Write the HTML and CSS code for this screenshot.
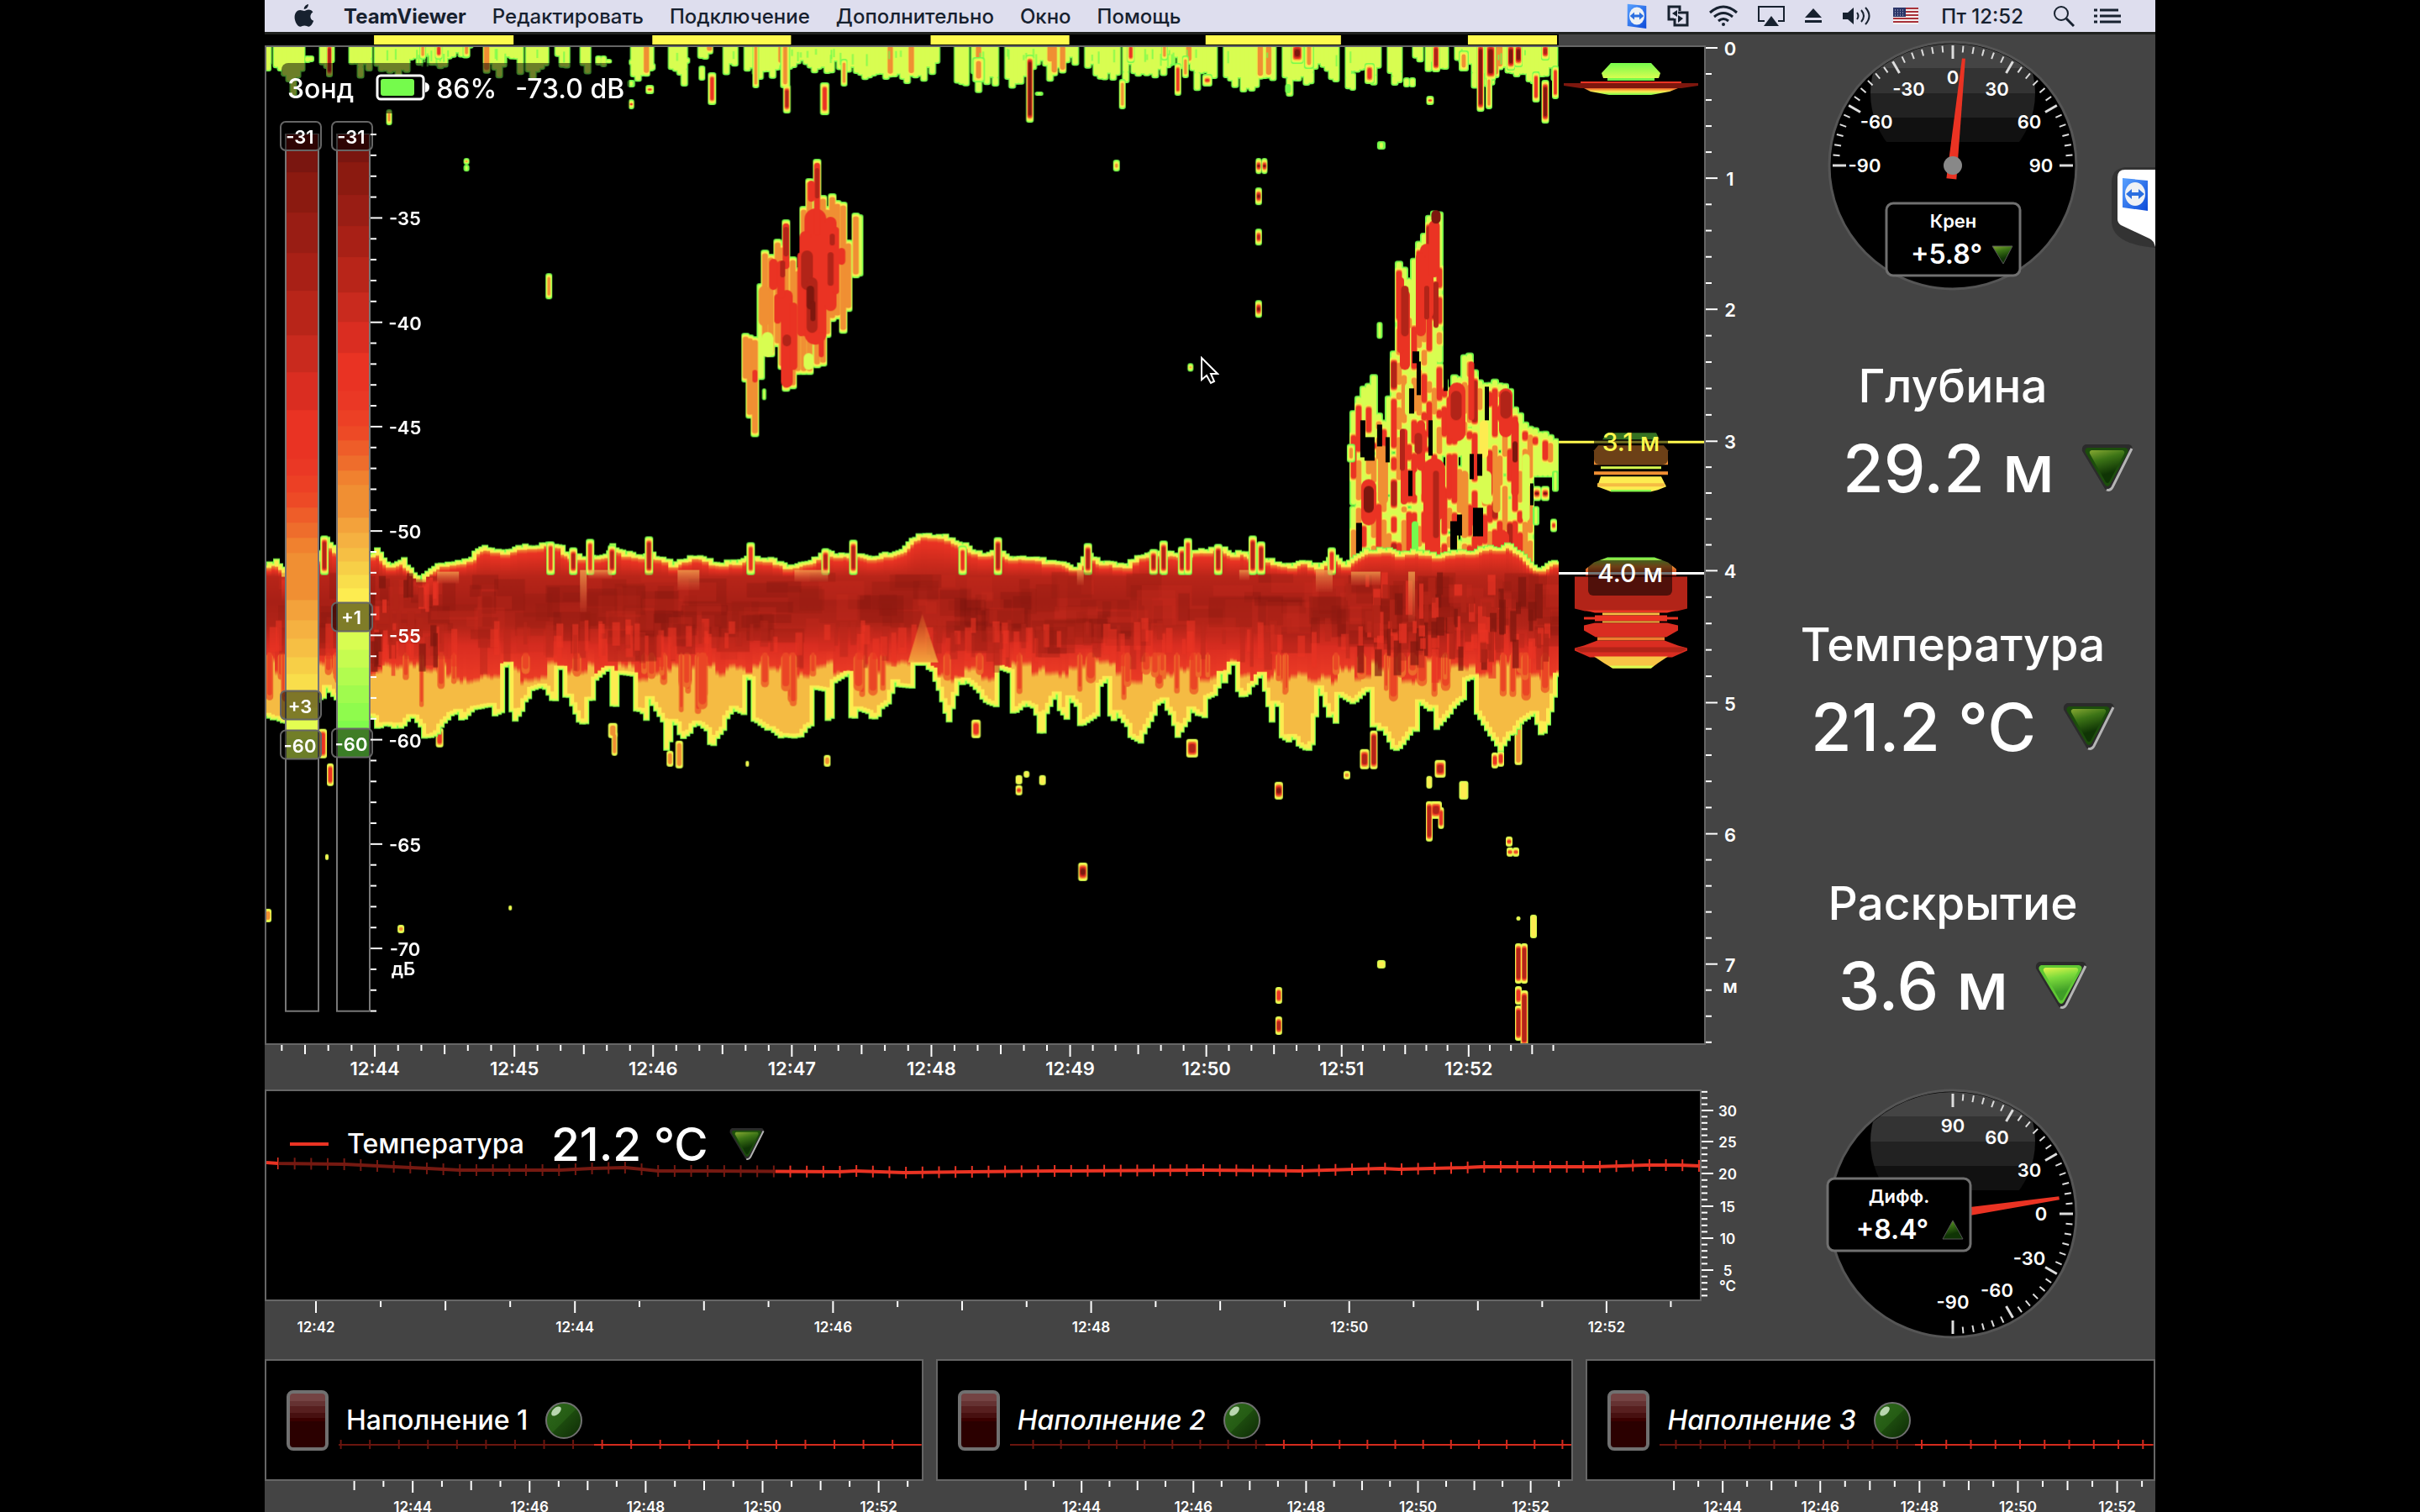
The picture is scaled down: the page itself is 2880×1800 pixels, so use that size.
FILE: index.html
```html
<!DOCTYPE html>
<html lang="ru">
<head>
  <meta charset="utf-8">
  <title>TeamViewer</title>
  <link rel="stylesheet" href="styles.css">
</head>
<body>
  <svg class="defs" aria-hidden="true">
    <defs>
      <linearGradient id="dimFace" x1="0" y1="0" x2="0.3" y2="1">
        <stop offset="0" stop-color="#86a832"/><stop offset="0.35" stop-color="#3c7416"/><stop offset="0.8" stop-color="#0f3405"/>
      </linearGradient>
      <linearGradient id="litFace" x1="0" y1="0" x2="0.2" y2="1">
        <stop offset="0" stop-color="#e4f54c"/><stop offset="0.35" stop-color="#7ddb3c"/><stop offset="0.8" stop-color="#3f9e27"/>
      </linearGradient>
      <linearGradient id="ballFace" x1="0" y1="0" x2="1" y2="1">
        <stop offset="0" stop-color="#2f6a1c"/><stop offset="0.5" stop-color="#255c14"/><stop offset="0.52" stop-color="#1c4a0e"/><stop offset="1" stop-color="#0d2a05"/>
      </linearGradient>
      <linearGradient id="tvFace" x1="0" y1="0" x2="1" y2="1">
        <stop offset="0" stop-color="#5aa2ff"/><stop offset="1" stop-color="#0b49d8"/>
      </linearGradient>
      <symbol id="arrow-down" viewBox="0 0 62 58">
        <path d="M5 1h51q6 1 4 8L36 54q-4 5-8 0L1 9Q0 3 5 1z" fill="#2b2b2b"/>
        <path d="M60 6L37 52q-3 5-7 3" fill="none" stroke="#b5b5b5" stroke-width="3"/>
        <path d="M7 5h45q5 1 3 6L34 49q-3 4-6 0L5 11q-2-4 2-6z" fill="#1c4d0c"/>
        <path d="M12 8h37q3 1 2 4L33 46q-2 2-4 0L10 12q-1-3 2-4z" fill="url(#dimFace)"/>
      </symbol>
      <symbol id="arrow-lit" viewBox="0 0 62 58">
        <path d="M5 1h51q6 1 4 8L36 54q-4 5-8 0L1 9Q0 3 5 1z" fill="#2b2b2b"/>
        <path d="M60 6L37 52q-3 5-7 3" fill="none" stroke="#b5b5b5" stroke-width="3"/>
        <path d="M7 5h45q5 1 3 6L34 49q-3 4-6 0L5 11q-2-4 2-6z" fill="#5fc733"/>
        <path d="M12 8h37q3 1 2 4L33 46q-2 2-4 0L10 12q-1-3 2-4z" fill="url(#litFace)"/>
      </symbol>
      <symbol id="ball" viewBox="0 0 46 46">
        <circle cx="23" cy="23" r="21" fill="url(#ballFace)" stroke="#707070" stroke-width="2"/>
        <ellipse cx="14" cy="12" rx="7" ry="4" transform="rotate(-42 14 12)" fill="#b9d7b0"/>
      </symbol>
      <symbol id="teamviewer" viewBox="0 0 34 40">
        <path d="M2 1l30 3v36L2 36z" fill="url(#tvFace)"/>
        <ellipse cx="17" cy="20" rx="12" ry="14" fill="#eef1f5"/>
        <path d="M6 20l7-6v4h8v-4l7 6-7 6v-4h-8v4z" fill="#2b6fe0"/>
      </symbol>
    </defs>
  </svg>

  <main class="desk">
    <nav class="menubar">
      <button class="menu-btn" aria-label="Apple">
        <svg width="24" height="28" viewBox="0 0 24 28"><path d="M17 0c.2 3-2.400 6-5.200 6C11.600 3 14.200.4 17 0zM12 8c1.400 0 2.800-1.400 5.400-1.400 2.200 0 4 1.200 5 2.800-4.400 2.600-3.800 8.600.8 10.400-1 3-3.400 7-5.800 7-1.800 0-2.600-1.200-5-1.200s-3.200 1.200-5 1.200C4 26.800.6 20.600.6 15.600c0-5.400 3.200-8.600 6.600-8.600C9.200 7 10.800 8 12 8z" fill="#17212f"/></svg>
      </button>
      <button class="menu-btn menu-app">TeamViewer</button>
      <button class="menu-btn">Редактировать</button>
      <button class="menu-btn">Подключение</button>
      <button class="menu-btn">Дополнительно</button>
      <button class="menu-btn">Окно</button>
      <button class="menu-btn">Помощь</button>
      <div class="menu-status">
        <svg width="26" height="30"><use href="#teamviewer"/></svg>
        <svg width="26" height="26" viewBox="0 0 26 26" fill="none" stroke="#17212f" stroke-width="3"><path d="M8 17H2V2h13v5M13 9h11v15H9v-8"/><path d="M6 10l6-4v8zM19 16l-6 5v-9z" fill="#17212f" stroke="none"/></svg>
        <svg width="36" height="26" viewBox="0 0 36 26" fill="none" stroke="#17212f" stroke-width="3"><path d="M2 9Q18-5 34 9M7 14q11-9 22 0M12 19q6-5 12 0"/><circle cx="18" cy="23" r="2" fill="#17212f" stroke="none"/></svg>
        <svg width="32" height="26" viewBox="0 0 32 26"><path d="M8 19H1V2h30v17h-7" fill="none" stroke="#17212f" stroke-width="2"/><path d="M16 13l9 12H7z" fill="#17212f"/></svg>
        <svg width="22" height="18" viewBox="0 0 22 18" fill="#17212f"><path d="M11 0l10 11H1zM1 14h20v3H1z"/></svg>
        <svg width="38" height="26" viewBox="0 0 38 26"><path d="M1 9h6l7-6v20l-7-6H1z" fill="#17212f"/><path d="M18 9q3 4 0 8M23 6q6 7 0 14M28 3q9 10 0 20" fill="none" stroke="#17212f" stroke-width="2"/></svg>
        <svg width="30" height="20" viewBox="0 0 30 20"><path d="M0 0h30v20H0z" fill="#f4f0f0"/><path d="M0 1h30M0 5h30M0 9h30M0 13h30M0 17h30" stroke="#a8323a" stroke-width="2"/><path d="M0 0h15v11H0z" fill="#2b3568"/><path d="M2 3h11M2 6h11M2 9h11" stroke="#d5d8e8" stroke-width="1" stroke-dasharray="1 2"/></svg>
        <time>Пт 12:52</time>
        <button class="menu-btn" aria-label="Поиск"><svg width="26" height="26" viewBox="0 0 26 26" fill="none" stroke="#17212f" stroke-width="2"><circle cx="10" cy="10" r="8"/><path d="M16 16l9 9" stroke-width="3"/></svg></button>
        <button class="menu-btn" aria-label="Уведомления"><svg width="32" height="20" viewBox="0 0 32 20" stroke="#17212f" stroke-width="3"><path d="M0 3h4M7 3h22M0 10h4M7 10h25M0 17h4M7 17h25"/></svg></button>
      </div>
    </nav>

    <div class="work">
      <div class="plots">
        <div class="pings"><svg id="pings" class="ping-strip"></svg></div>

        <section class="sonar-row">
          <div class="sonar">
            <canvas id="echogram" class="echogram" width="1537" height="1185"></canvas>
            <svg class="scope" viewBox="0 0 173 1185" preserveAspectRatio="none">
              <linearGradient id="scopeA" x1="0" y1="0" x2="0" y2="1"><stop offset="0" stop-color="#75fb4c"/><stop offset="1" stop-color="#d8fd51"/></linearGradient>
              <linearGradient id="scopeB" x1="0" y1="0" x2="0" y2="1"><stop offset="0" stop-color="#ee5d29"/><stop offset="0.5" stop-color="#fdec50"/><stop offset="1" stop-color="#75fb4c"/></linearGradient>
              <linearGradient id="scopeC" x1="0" y1="0" x2="0" y2="1"><stop offset="0" stop-color="#75fb4c"/><stop offset="0.5" stop-color="#f08f33"/><stop offset="1" stop-color="#b22418"/></linearGradient>
              <g>
                <path d="M62 19h48l11 12-2 6H53l-2-6z" fill="url(#scopeA)"/>
                <path d="M58 37h56v3H58z" fill="#75fb4c"/>
                <path d="M26 41h120v2H26z" fill="#ea3323"/>
                <path d="M6 43h160v3l-20 3H26L6 46z" fill="#7d170e"/>
                <path d="M30 49h112l-10 4-22 4H60l-22-4z" fill="url(#scopeB)"/>
              </g>
              <g>
                <path d="M58 459h58l4 8H52z" fill="#75fb4c"/>
                <path d="M47 474h78l5 6v17H42v-17z" fill="#f08f33"/>
                <path d="M50 499h72v3H50z" fill="#d8fd51"/>
                <path d="M42 505h88v4H42z" fill="#f08f33"/>
                <path d="M50 511h72l6 12-10 4-8 2H62l-16-6z" fill="#fdec50"/>
                <path d="M46 519h80v4H46z" fill="#f5bb43"/>
                <path d="M62 527h48v2H62z" fill="#75fb4c"/>
              </g>
              <g>
                <path d="M58 607h56l16 6 10 8v8H32v-8l10-8z" fill="url(#scopeC)"/>
                <path d="M19 630h134v38l-12 3H31l-12-3z" fill="#b22418"/>
                <path d="M31 670h110l-12 3H43z" fill="#ea3323"/>
                <path d="M52 673h68v3H52z" fill="#f5bb43"/>
                <path d="M43 676h86v2h13v3h-13v2H43v-2H30v-3h13z" fill="#ea3323"/>
                <path d="M52 683h68v2H52z" fill="#f5bb43"/>
                <path d="M43 685h86l13 3v6l-14 8H44l-14-8v-6z" fill="#da2d21"/>
                <path d="M46 702h80v4H46z" fill="#ee7d2f"/>
                <path d="M46 706h80l16 6 11 3v3l-18 8H37l-18-8v-3l11-3z" fill="#da2d21"/>
                <path d="M24 714h124l5 2-8 4H27l-8-4z" fill="#b22418"/>
                <path d="M42 725h88l-12 8-8 6H64l-10-6z" fill="#f8c545"/>
                <path d="M60 736h53l-3 3H64z" fill="#d8fd51"/>
              </g>
              <path d="M0 470h173" stroke="#fff94d" stroke-width="3"/>
              <path d="M0 626h173" stroke="#fff" stroke-width="3"/>
            </svg>
            <span class="mark mark-upper">3.1 м</span>
            <span class="mark mark-lower">4.0 м</span>

            <div class="probe">
              <span class="probe-name">Зонд</span>
              <svg width="64" height="34" viewBox="0 0 64 34"><rect x="2" y="2" width="55" height="28" rx="4" fill="#000" stroke="#fff" stroke-width="3"/><rect x="6" y="6" width="40" height="20" rx="3" fill="#75fb4c"/><path d="M59 10q5 1 5 6t-5 6z" fill="#fff"/></svg>
              <span>86%</span>
              <span class="probe-level">-73.0 dB</span>
            </div>

            <svg id="levels" class="levels"></svg>

            <svg class="cursor" width="22" height="34" viewBox="0 0 22 34"><path d="M1 2v26l6-5 5 9 4-2-4-9h8z" fill="#000" stroke="#fff" stroke-width="2"/></svg>
          </div>
          <svg id="depth" class="axis-y"></svg>
        </section>
        <svg id="sonarTime" class="axis-x"></svg>

        <section class="temp-row">
          <div class="temp">
            <svg id="tempLine" class="trace" viewBox="0 0 1705 248" preserveAspectRatio="none"></svg>
            <div class="legend temp-legend">
              <span class="dash"></span>
              <span>Температура</span>
              <span class="legend-value">21.2 °C</span>
              <svg width="42" height="42"><use href="#arrow-down"/></svg>
            </div>
          </div>
          <svg id="degrees" class="axis-y axis-small"></svg>
        </section>
        <svg id="tempTime" class="axis-x axis-small axis-temp"></svg>
      </div>

      <aside class="side">
        <svg id="roll" class="gauge" viewBox="-150 -150 300 300"></svg>
        <section class="metric metric-depth">
          <h2>Глубина</h2>
          <div class="metric-row">29.2 м <svg width="62" height="58"><use href="#arrow-down"/></svg></div>
        </section>
        <section class="metric">
          <h2>Температура</h2>
          <div class="metric-row">21.2 °C <svg width="62" height="58"><use href="#arrow-down"/></svg></div>
        </section>
        <section class="metric">
          <h2>Раскрытие</h2>
          <div class="metric-row">3.6 м <svg width="62" height="58"><use href="#arrow-lit"/></svg></div>
        </section>
        <svg id="trim" class="gauge gauge-trim" viewBox="-150 -150 300 300"></svg>
      </aside>
    </div>

    <div class="tanks">
      <section class="tank">
        <div class="tank-plot">
          <svg id="tankLine1" class="trace"></svg>
          <div class="legend"><button class="rocker" aria-label="Наполнение 1"></button><span>Наполнение 1</span><svg width="46" height="46"><use href="#ball"/></svg></div>
        </div>
        <svg id="tankTime1" class="axis-x axis-small axis-tank"></svg>
      </section>
      <section class="tank">
        <div class="tank-plot">
          <svg id="tankLine2" class="trace"></svg>
          <div class="legend"><button class="rocker" aria-label="Наполнение 2"></button><em>Наполнение 2</em><svg width="46" height="46"><use href="#ball"/></svg></div>
        </div>
        <svg id="tankTime2" class="axis-x axis-small axis-tank"></svg>
      </section>
      <section class="tank">
        <div class="tank-plot">
          <svg id="tankLine3" class="trace"></svg>
          <div class="legend"><button class="rocker" aria-label="Наполнение 3"></button><em>Наполнение 3</em><svg width="46" height="46"><use href="#ball"/></svg></div>
        </div>
        <svg id="tankTime3" class="axis-x axis-small axis-tank"></svg>
      </section>
    </div>

    <button class="tv-tab" aria-label="TeamViewer">
      <svg width="54" height="98" viewBox="0 0 54 98">
        <path d="M54 0H18Q2 2 2 18v48q2 26 52 30z" fill="#333"/>
        <path d="M54 3H18q-9 0-9 9v50q0 4 4 7l34 16q5 2 7 10z" fill="#fff"/>
        <use href="#teamviewer" x="13" y="12" width="34" height="40"/>
      </svg>
    </button>
  </main>

  <script src="sonar.js"></script>
</body>
</html>
```
FILE: styles.css
```css
* {
  box-sizing: border-box;
}
body {
  margin: 0;
  background: #000;
  color: #fff;
  font-family: Inter, Roboto, "Liberation Sans", sans-serif;
  font-weight: 500;
  display: grid;
  grid-template-columns: 7fr 50fr 7fr;
}
button {
  border: none;
  padding: 0;
  background: none;
  font: inherit;
  color: inherit;
}
svg {
  display: block;
  flex: none;
}
.defs {
  position: absolute;
  width: 0;
  height: 0;
}
.desk {
  grid-column: 2;
  position: relative;
  display: flex;
  flex-direction: column;
  min-height: 100vh;
  min-width: 0;
  background: #444;
}

/* menu bar */
.menubar {
  height: 41px;
  padding: 0 41px 0 35px;
  display: flex;
  align-items: center;
  gap: 31px;
  background: #dedeee;
  border-bottom: 3px solid #20221f;
  color: #17212f;
  font-size: 24px;
}
.menu-app {
  margin-left: 4px;
  font-weight: 700;
}
.menu-status {
  margin-left: auto;
  display: flex;
  align-items: center;
  gap: 23px;
}
.menu-status time {
  margin: 0 12px 0 4px;
}

/* main area */
.work {
  flex: 1;
  display: flex;
}
.plots {
  flex: 1;
  min-width: 0;
  display: flex;
  flex-direction: column;
}
.pings {
  height: 13px;
  padding-right: 246px;
}
.ping-strip {
  width: 100%;
  height: 13px;
  background: #000;
}
.sonar-row {
  flex: 1;
  display: flex;
}
.sonar {
  position: relative;
  flex: 1;
  min-width: 0;
  display: flex;
  background: #000;
  border: 2px solid #666;
}
.echogram {
  flex: 1;
  min-width: 0;
  width: 0;
  height: 100%;
}
.scope {
  width: 173px;
  height: 100%;
}
.axis-y {
  width: 71px;
  height: auto;
  align-self: stretch;
  overflow: visible;
}
.axis-x {
  width: 100%;
  height: 53px;
  overflow: visible;
}
.axis-x text, .axis-y text, .levels text {
  fill: #fff;
  font-size: 22px;
  font-weight: 600;
  text-anchor: middle;
  dominant-baseline: central;
}
.axis-x.axis-small text, .axis-y.axis-small text {
  font-size: 17px;
}
.axis-x line, .axis-y line, .levels line {
  stroke: #fff;
  stroke-width: 2;
}
.mark {
  position: absolute;
  right: 38px;
  height: 42px;
  width: 100px;
  border-radius: 6px;
  background: rgba(0, 0, 0, 0.55);
  font-size: 30px;
  line-height: 30px;
  text-align: center;
}
.mark-upper {
  top: 38.400%;
  width: 88px;
  right: 43px;
  color: #fff94d;
}
.mark-lower {
  top: 51.500%;
}
.probe {
  position: absolute;
  top: 19px;
  left: 18px;
  width: 414px;
  height: 60px;
  padding-left: 7px;
  display: flex;
  align-items: center;
  gap: 8px;
  border-radius: 8px;
  background: rgba(0, 0, 0, 0.5);
  font-size: 32px;
}
.probe-name {
  margin-right: 18px;
}
.probe-level {
  margin-left: 14px;
}
.levels {
  position: absolute;
  top: 0;
  left: 0;
  width: 200px;
  height: 100%;
}
.levels .tag {
  fill: rgba(0, 0, 0, 0.5);
  stroke: #666;
  stroke-width: 2;
}
.levels .tube {
  fill: #000;
  stroke: #777;
  stroke-width: 2;
}
.cursor {
  position: absolute;
  left: 65%;
  top: 31%;
}

/* temperature trace */
.temp-row {
  height: 252px;
  display: flex;
}
.temp {
  position: relative;
  flex: 1;
  background: #000;
  border: 2px solid #666;
}
.temp-row .axis-y {
  width: 76px;
}
.axis-temp {
  height: 69px;
}
.trace {
  position: absolute;
  top: 0;
  left: 0;
  width: 100%;
  height: 100%;
}
.legend {
  position: relative;
  display: flex;
  align-items: center;
  background: rgba(0, 0, 0, 0.5);
  font-size: 32px;
}
.temp-legend {
  margin: 18px 0 0 14px;
  padding-left: 14px;
  width: 592px;
  height: 90px;
}
.dash {
  width: 46px;
  height: 4px;
  margin-right: 22px;
  background: #ea3323;
}
.legend-value {
  margin: 0 25px 0 32px;
  font-size: 55px;
}

/* readouts */
.side {
  width: 464px;
  padding: 6px 18px 0 0;
  display: flex;
  flex-direction: column;
  align-items: center;
}
.gauge {
  width: 300px;
  height: 300px;
  margin-bottom: 80px;
}
.gauge-trim {
  margin: -56px 0 0;
  overflow: visible;
}
.gauge text {
  fill: #fff;
  font-size: 22px;
  font-weight: 600;
  text-anchor: middle;
  dominant-baseline: central;
}
.gauge .reading {
  font-size: 32px;
}
.metric {
  width: 100%;
  margin-bottom: 130px;
}
.metric h2 {
  margin: 0 0 18px;
  font-size: 55px;
  line-height: 64px;
  font-weight: 500;
  text-align: center;
}
.metric-row {
  display: flex;
  justify-content: center;
  align-items: center;
  gap: 32px;
  padding-left: 24px;
  font-size: 79px;
  line-height: 96px;
  white-space: nowrap;
}
.metric-depth .metric-row {
  padding-left: 84px;
}

/* tanks */
.tanks {
  display: grid;
  grid-template-columns: 783fr 758fr 677fr;
  gap: 15px;
}
.tank {
  min-width: 0;
}
.tank-plot {
  position: relative;
  height: 145px;
  padding-top: 33px;
  background: #000;
  border: 2px solid #666;
}
.tank-plot .legend {
  width: 390px;
  height: 76px;
  padding-left: 24px;
}
.tank-plot .legend svg {
  margin-left: 20px;
}
.rocker {
  width: 50px;
  height: 72px;
  margin-right: 21px;
  border: 4px solid #707070;
  border-radius: 8px;
  background: linear-gradient(#744343 0 14%, #653232 14% 24%, #571f1f 24% 36%, #471010 36% 46%, #3a0000 46% 52%, #2b0000 52%);
}
.axis-tank {
  height: 40px;
}

.tv-tab {
  position: absolute;
  right: 0;
  top: 199px;
}
```
FILE: sonar.js
```js
const NS = 'http://www.w3.org/2000/svg';

function add(parent, name, attrs, text) {
  const el = document.createElementNS(NS, name);
  for (const k in attrs) el.setAttribute(k, attrs[k]);
  if (text !== undefined) el.textContent = text;
  parent.appendChild(el);
  return el;
}
const byId = id => document.getElementById(id);

// ---- axes ----
// majors: positions along the span, the steps between them may differ
function tickList(o) {
  const out = [];
  const m = o.majors;
  const n = m.length;
  for (let i = -1; i < n; i++) {
    const step = i < 0 ? m[1] - m[0] : i === n - 1 ? m[n - 1] - m[n - 2] : m[i + 1] - m[i];
    const base = i < 0 ? m[0] - step : m[i];
    for (let k = 0; k < o.div; k++) {
      const pos = base + step * k / o.div;
      if (pos < o.from || pos > o.to) continue;
      out.push({ pos, kind: k === 0 ? 2 : k === o.mid ? 1 : 0 });
    }
  }
  return out;
}

function axisX(id, o) {
  const svg = byId(id);
  tickList(o).forEach(t => {
    const x = (t.pos / o.span * 100).toFixed(3) + '%';
    add(svg, 'line', { x1: x, x2: x, y1: 0, y2: [7, 11, 14][t.kind] });
  });
  o.majors.forEach((p, i) => add(svg, 'text', { x: (p / o.span * 100).toFixed(3) + '%', y: o.labelY }, o.labels[i]));
}

function axisY(id, o) {
  const svg = byId(id);
  tickList(o).forEach(t => {
    const y = (t.pos / o.span * 100).toFixed(3) + '%';
    add(svg, 'line', { x1: 0, x2: t.kind === 2 ? 14 : 7, y1: y, y2: y });
  });
  o.majors.forEach((p, i) => add(svg, 'text', { x: o.labelX, y: ((p + 1) / o.span * 100).toFixed(3) + '%' }, o.labels[i]));
  add(svg, 'text', { x: o.labelX, y: (o.unitY / o.span * 100).toFixed(3) + '%' }, o.unit);
}

axisX('sonarTime', {
  span: 1785, div: 6, mid: 3, from: 20, to: 1540, labelY: 28,
  majors: [131, 297, 462, 627, 793, 958, 1120, 1281, 1432],
  labels: ['12:44', '12:45', '12:46', '12:47', '12:48', '12:49', '12:50', '12:51', '12:52']
});
axisX('tempTime', {
  span: 1785, div: 4, mid: 2, from: 60, to: 1680, labelY: 31,
  majors: [61, 369, 676, 983, 1290, 1596],
  labels: ['12:42', '12:44', '12:46', '12:48', '12:50', '12:52']
});
const hours = ['12:44', '12:46', '12:48', '12:50', '12:52'];
axisX('tankTime1', { span: 783, div: 4, mid: 2, from: 100, to: 770, labelY: 31, majors: [176, 315, 453, 592, 730], labels: hours });
axisX('tankTime2', { span: 758, div: 4, mid: 2, from: 100, to: 745, labelY: 31, majors: [173, 306, 440, 573, 707], labels: hours });
axisX('tankTime3', { span: 677, div: 4, mid: 2, from: 100, to: 665, labelY: 31, majors: [163, 279, 397, 514, 632], labels: hours });
axisY('depth', {
  span: 1189, div: 5, mid: 9, from: 0, to: 1189, labelX: 29,
  majors: [3, 158, 314, 471, 625, 782, 938, 1093],
  labels: [0, 1, 2, 3, 4, 5, 6, 7], unit: 'м', unitY: 1119
});
axisY('degrees', {
  span: 252, div: 5, mid: 9, from: 0, to: 250, labelX: 31,
  majors: [25, 62, 100, 139, 177, 215], labels: [30, 25, 20, 15, 10, 5], unit: '°C', unitY: 234
});

[[130, 166], [461, 165], [792, 165], [1119, 161], [1431, 106]].forEach(b =>
  add(byId('pings'), 'rect', { x: b[0] / 15.39 + '%', width: b[1] / 15.39 + '%', y: 1, height: 11, fill: '#fffa4d' }));

// ---- level bars ----
const barColors = ['#5c0906', '#7a1610', '#8b1a10', '#991d14', '#a82016', '#b82519', '#c92a1e', '#da2d21', '#e93323', '#ea3825',
  '#ec4025', '#ed4a26', '#ee5d29', '#ee6d2c', '#f0812f', '#f08f33', '#f3a23b', '#f5b141', '#f6bf44', '#f7cf47', '#f9de4b', '#fdec50', '#fff850'];
const barStops = [
  { x: 23, y: [104, 122, 149, 197, 245, 290, 343, 387, 432, 490, 510, 530, 548, 566, 584, 602, 658, 682, 704, 726, 746, 768, 786], green: 799, end: 846, tag: 766, text: '+3', low: 813 },
  { x: 84, y: [104, 122, 137, 176, 213, 250, 292, 327, 364, 409, 432, 451, 468, 486, 504, 521, 560, 578, 596, 612, 628, 644, 660], green: 696, end: 844, tag: 661, text: '+1', low: 811 }
];
const lv = byId('levels');
const pct = v => (v / 1185 * 100).toFixed(3) + '%';
barStops.forEach(b => {
  add(lv, 'rect', { class: 'tube', x: b.x, y: pct(104), width: 39, height: pct(1043) });
  b.y.forEach((y, i) => {
    const next = b.y[i + 1] || b.green;
    add(lv, 'rect', { x: b.x + 1, y: pct(y), width: 37, height: pct(next - y + 1), fill: barColors[i] });
  });
  const greens = b.x < 50 ? ['#e4fd51', '#d8fd51'] : ['#d8fd51', '#c6fc50', '#b2fc4f', '#a0fb4e', '#8ffb4d', '#80fb4c', '#75fb4c'];
  const h = (b.end - b.green) / greens.length;
  greens.forEach((c, i) => add(lv, 'rect', { x: b.x + 1, y: pct(b.green + i * h), width: 37, height: pct(h + 1), fill: c }));
  [[89, '-31'], [b.tag, b.text], [b.low, '-60']].forEach(t => {
    add(lv, 'rect', { class: 'tag', x: b.x - 6, y: pct(t[0]), width: 48, height: 34, rx: 6 });
    add(lv, 'text', { x: b.x + 17, y: pct(t[0] + 18) }, t[1]);
  });
});
for (let db = 31; db <= 73; db++) {
  const y = 104 + (db - 31) * 24.83;
  add(lv, 'line', { x1: 124, x2: db % 5 ? 131 : 138, y1: pct(y), y2: pct(y) });
  if (db % 5 === 0) add(lv, 'text', { x: 165, y: pct(y + 1) }, '-' + db);
}
add(lv, 'text', { x: 163, y: pct(1096) }, 'дБ');

// ---- gauges ----
function gauge(id, o) {
  const svg = byId(id);
  const clip = add(add(svg, 'defs', {}), 'clipPath', { id: id + 'Clip' });
  add(clip, 'circle', { cx: 0, cy: 0, r: 145 });
  add(svg, 'circle', { cx: 0, cy: 0, r: 147, fill: '#000', stroke: '#555', 'stroke-width': 3 });
  const gloss = add(svg, 'g', { 'clip-path': `url(#${id}Clip)` });
  const clip2 = add(svg.querySelector('defs'), 'clipPath', { id: id + 'Gloss' });
  add(clip2, 'circle', { cx: 0, cy: -86, r: 98 });
  const inner = add(gloss, 'g', { 'clip-path': `url(#${id}Gloss)` });
  [[-150, '#444'], [-116, '#333'], [-86, '#222'], [-57, '#111']].forEach((b, i, a) =>
    add(inner, 'rect', { x: -110, y: b[0], width: 220, height: (a[i + 1] ? a[i + 1][0] : -28) - b[0], fill: b[1] }));
  // zero points up for roll and right for trim
  const at = (v, r) => {
    const a = (o.side ? -v : v - 90) * Math.PI / 180;
    return [r * Math.cos(a), r * Math.sin(a)];
  };
  for (let v = -90; v <= 90; v += 5) {
    const big = v % 30 === 0;
    const p = at(v, 143), q = at(v, big ? 127 : 135);
    add(svg, 'line', { x1: p[0], y1: p[1], x2: q[0], y2: q[1], stroke: '#ddd', 'stroke-width': big ? 3 : 2 });
    if (big) {
      const t = at(v, 105);
      add(svg, 'text', { x: t[0], y: t[1] }, v);
    }
  }
  const rot = o.side ? 90 - o.value : o.value;
  add(svg, 'path', { d: 'M-2-128h4L6 16H-6z', fill: '#ea3323', transform: `rotate(${rot})` });
  add(svg, 'circle', { cx: 0, cy: 0, r: 11, fill: '#888' });
  const b = o.box;
  add(svg, 'rect', { x: b[0], y: b[1], width: b[2], height: 86, rx: 8, fill: '#000', stroke: '#707070', 'stroke-width': 3 });
  add(svg, 'text', { x: b[0] + b[2] / 2, y: b[1] + 21 }, o.name);
  add(svg, 'text', { x: b[0] + b[2] / 2 - 8, y: b[1] + 60, class: 'reading' }, o.text);
  const tx = b[0] + b[2] - 21, ty = b[1] + 61;
  add(svg, 'path', { d: o.side ? `M${tx} ${ty - 11}l12 22h-24z` : `M${tx - 12} ${ty - 10}h24l-11 21z`, fill: 'url(#dimFace)', stroke: '#555', 'stroke-width': 1 });
}
gauge('roll', { value: 5.8, name: 'Крен', text: '+5.8°', box: [-79, 45, 159] });
gauge('trim', { side: true, value: 8.4, name: 'Дифф.', text: '+8.4°', box: [-149, -42, 170] });

// ---- traces ----
const temp = [[0, 85], [14, 86], [93, 87], [152, 90], [192, 92], [230, 94], [349, 94], [387, 92], [427, 91], [466, 95], [525, 95], [681, 96],
  [701, 95], [759, 97], [837, 96], [936, 95], [1112, 94], [1229, 95], [1327, 92], [1347, 93], [1425, 91], [1445, 90], [1582, 90], [1641, 88], [1680, 88], [1705, 89]];
add(byId('tempLine'), 'polyline', { points: temp.join(' '), fill: 'none', stroke: '#ea3323', 'stroke-width': 4 });
for (let x = 14, i = 0; x < 1705; x += 19.65) {
  while (temp[i + 1][0] < x) i++;
  const [a, b] = [temp[i], temp[i + 1]];
  const y = a[1] + (b[1] - a[1]) * (x - a[0]) / (b[0] - a[0]);
  add(byId('tempLine'), 'line', { x1: x, x2: x, y1: y - 7, y2: y + 7, stroke: '#ea3323', 'stroke-width': 2 });
}
[[1, 783, 89, 34.7], [2, 758, 114, 33.3], [3, 677, 106, 29.4]].forEach(([n, span, first, step]) => {
  const svg = byId('tankLine' + n);
  add(svg, 'line', { x1: 86, x2: '100%', y1: 100, y2: 100, stroke: '#d42a1d', 'stroke-width': 2 });
  for (let x = first; x < span; x += step) {
    const p = x / span * 100 + '%';
    add(svg, 'line', { x1: p, x2: p, y1: 94, y2: 105, stroke: '#d42a1d', 'stroke-width': 2 });
  }
});

// ---- echogram ----
const cx = byId('echogram').getContext('2d');
cx.translate(-317, -56);
let seed = 7;
const rnd = () => (seed = (seed * 16807) % 2147483647) / 2147483647;
const layers = ['#75fb4c', '#d8fd51', '#fdec50', '#f08f33', '#ea3323', '#b22418', '#7d170e'];

// streak: x, top, bottom, width, level; taper is how much the core narrows
function paint(streaks, from = 0, taper = 0.6) {
  for (let l = from; l < layers.length; l++) {
    cx.fillStyle = layers[l];
    streaks.forEach(([x, y1, y2, w, lev]) => {
      if (lev < l) return;
      const k = lev ? (l - from) / lev : 0;
      const ww = w * (1 - k * taper), in_ = Math.min((l - from) * 1.5, (y2 - y1) * 0.42);
      cx.beginPath();
      cx.roundRect(x - ww / 2, y1 + in_, ww, y2 - y1 - in_ * 2, Math.min(3, ww / 2));
      cx.fill();
    });
  }
}
function lerp(pts, x) {
  let i = 0;
  while (i < pts.length - 2 && pts[i + 1][0] < x) i++;
  const [a, b] = [pts[i], pts[i + 1]];
  const t = Math.max(0, Math.min(1, (x - a[0]) / (b[0] - a[0])));
  return a[1] + (b[1] - a[1]) * t;
}

// surface noise
const quiet = [[322, 328], [362, 380], [399, 416], [441, 447], [563, 576], [624, 628], [652, 662], [675, 690], [700, 750], [776, 798], [817, 830],
  [847, 860], [878, 884], [1117, 1136], [1150, 1154], [1188, 1194], [1283, 1291], [1332, 1336], [1449, 1456], [1518, 1524], [1593, 1600],
  [1642, 1652], [1666, 1680], [1692, 1698], [1722, 1730]];
const surface = [];
for (let x = 319; x < 1852; x += 5) {
  if (quiet.some(q => x >= q[0] && x <= q[1])) continue;
  const wave = Math.sin(x / 23) + Math.sin(x / 61 + 2) + Math.sin(x / 9);
  const len = (x < 880 ? 16 : 24) + wave * 6 + rnd() * 16;
  surface.push([x, 50, 56 + len, 9, rnd() < 0.06 ? 3 : 1]);
  if (rnd() < 0.1) surface.push([x, 56 + len - 4, 64 + len + rnd() * 14, 9, 1]);
}
[[319, 73, 85], [366, 66, 75], [370, 66, 74], [712, 66, 78], [718, 66, 80], [724, 70, 76], [752, 70, 78], [776, 75, 84], [817, 68, 76], [835, 78, 96],
  [1143, 66, 85], [1604, 84, 102], [1609, 86, 108], [1673, 92, 104], [1680, 92, 104]].forEach(s => surface.push([s[0], s[1], s[2], 8, 1]));
paint(surface, 0, 0.3);
// fine vertical grain
for (let i = 0; i < 90; i++) {
  cx.fillStyle = 'rgba(117,251,76,.8)';
  const x = 450 + rnd() * 1390;
  if (!quiet.some(q => x >= q[0] - 3 && x <= q[1] + 3)) cx.fillRect(x, 58 + rnd() * 8, 2, 6 + rnd() * 10);
}
paint([[392, 50, 92, 8, 5], [522, 50, 71, 9, 4], [503, 50, 71, 8, 3], [555, 50, 69, 9, 3], [847, 86, 125, 10, 4], [934, 50, 105, 12, 3],
  [936, 100, 135, 9, 5], [899, 50, 105, 8, 3], [981, 98, 137, 11, 4], [1004, 70, 103, 8, 3], [1225, 65, 146, 9, 6], [1164, 68, 98, 15, 3],
  [1335, 94, 130, 8, 3], [1345, 50, 75, 9, 4], [1385, 50, 72, 8, 3], [1401, 75, 114, 8, 4], [1410, 66, 93, 8, 3], [1436, 88, 103, 12, 4],
  [1543, 50, 76, 15, 6], [1557, 50, 82, 12, 3], [1629, 75, 100, 12, 4], [1708, 50, 86, 10, 5], [1701, 114, 125, 9, 4], [1741, 60, 85, 12, 3],
  [1761, 50, 133, 9, 6], [1773, 50, 96, 13, 6], [1771, 90, 130, 8, 3], [1797, 50, 84, 10, 6], [1806, 50, 80, 10, 6], [1827, 85, 122, 9, 4],
  [1838, 50, 72, 10, 5], [1838, 95, 147, 9, 6], [1850, 78, 118, 8, 4]]);

// loose echoes
paint([[463, 130, 149, 7, 3], [555, 188, 196, 7, 3], [555, 196, 204, 7, 1], [653, 325, 356, 8, 3], [751, 95, 104, 9, 1], [751, 118, 130, 7, 4],
  [773, 101, 112, 10, 4], [1328, 190, 204, 8, 3], [1497, 188, 207, 7, 6], [1504, 188, 207, 7, 6], [1497, 223, 244, 8, 6], [1497, 272, 292, 8, 5],
  [1497, 357, 378, 8, 6], [1643, 168, 178, 10, 1], [1641, 383, 403, 7, 1], [1416, 432, 442, 7, 3], [1236, 109, 114, 10, 1], [1532, 100, 111, 7, 0]]);
paint([[384, 867, 902, 10, 4], [393, 908, 935, 8, 4], [389, 1016, 1023, 4, 2], [319, 1081, 1097, 8, 3], [523, 866, 889, 9, 4], [729, 860, 878, 11, 3],
  [731, 870, 899, 7, 3], [797, 893, 912, 8, 3], [808, 881, 914, 9, 3], [889, 905, 912, 4, 2], [984, 898, 912, 8, 3], [607, 1077, 1083, 4, 2],
  [477, 1100, 1110, 8, 3], [1161, 856, 878, 11, 4], [1212, 922, 933, 8, 2], [1212, 934, 946, 8, 4], [1221, 917, 925, 7, 2], [1240, 922, 934, 8, 2],
  [1288, 1026, 1048, 11, 6], [1418, 879, 901, 14, 5], [1521, 930, 951, 10, 6], [1602, 917, 927, 8, 3], [1623, 891, 915, 11, 5], [1634, 869, 915, 9, 5],
  [1713, 904, 925, 13, 5], [1700, 923, 938, 7, 2], [1741, 929, 951, 11, 2], [1700, 953, 1001, 8, 5], [1708, 953, 974, 14, 5], [1714, 960, 986, 7, 4],
  [1778, 895, 914, 8, 4], [1785, 893, 912, 8, 4], [1806, 860, 910, 9, 3], [1795, 995, 1007, 8, 4], [1796, 1008, 1019, 8, 4], [1803, 1008, 1019, 8, 4],
  [1806, 1090, 1095, 5, 2], [1824, 1088, 1116, 8, 2], [1806, 1122, 1170, 8, 5], [1813, 1122, 1170, 8, 5], [1806, 1173, 1195, 8, 4],
  [1813, 1178, 1245, 9, 5], [1806, 1196, 1238, 8, 5], [1643, 1142, 1152, 10, 2], [1521, 1174, 1194, 8, 4], [1521, 1209, 1231, 8, 5]], 1);

// first school
const schoolA = [[887, 396, 455, 3], [892, 398, 498, 3], [898, 400, 520, 3], [905, 337, 452, 1], [910, 297, 421, 3], [917, 302, 425, 3],
  [925, 284, 413, 4], [930, 290, 440, 4], [935, 261, 466, 5], [943, 305, 463, 4], [949, 318, 446, 4], [956, 245, 446, 5], [963, 212, 446, 5],
  [972, 189, 438, 5], [979, 232, 436, 5], [984, 245, 402, 4], [990, 230, 383, 5], [996, 238, 380, 4], [1003, 240, 397, 3], [1009, 285, 371, 3],
  [1018, 253, 331, 3], [1022, 255, 329, 1]];
paint(schoolA.map(s => [s[0], s[1], s[2], 10, Math.min(s[3], 3)]), 0, 0.3);
function blobs(list) {
  list.forEach(([x, y1, y2, w, color]) => {
    cx.fillStyle = color || '#ea3323';
    cx.beginPath();
    cx.roundRect(x - w / 2, y1, w, y2 - y1, w / 2);
    cx.fill();
  });
}
blobs([[913, 395, 425, 14, '#d8fd51'], [962, 420, 440, 12, '#d8fd51'], [909, 340, 388, 13, '#f08f33'], [935, 266, 320, 8], [936, 345, 461, 14],
  [925, 350, 385, 8], [920, 308, 345, 10], [929, 310, 355, 9], [944, 360, 440, 9], [970, 248, 410, 26], [958, 275, 400, 14], [972, 194, 280, 7],
  [965, 215, 240, 8], [988, 258, 370, 14], [953, 300, 400, 9], [1001, 295, 315, 9], [994, 270, 350, 8], [977, 395, 425, 6], [898, 440, 455, 6],
  [935, 270, 305, 6, '#b22418'], [960, 298, 345, 14, '#b22418'], [966, 330, 396, 13, '#b22418'], [988, 300, 340, 7, '#b22418'],
  [936, 398, 412, 10, '#b22418'], [972, 200, 236, 5, '#b22418'], [931, 310, 330, 6, '#b22418'], [990, 278, 292, 6, '#b22418'],
  [964, 340, 368, 9, '#7d170e'], [967, 358, 382, 6, '#7d170e']]);
paint([[909, 462, 476, 5, 1]]);

// second school, standing on the bottom
const topB = [[1607, 540], [1611, 467], [1618, 470], [1622, 455], [1629, 455], [1633, 425], [1637, 482], [1645, 500], [1651, 474], [1656, 440],
  [1659, 405], [1663, 310], [1669, 310], [1674, 333], [1680, 312], [1687, 283], [1692, 280], [1697, 260], [1703, 248], [1712, 250], [1715, 290],
  [1717, 440], [1720, 467], [1730, 440], [1738, 442], [1743, 411], [1750, 417], [1756, 450], [1761, 448], [1771, 450], [1781, 450], [1794, 455],
  [1802, 478], [1812, 497], [1820, 503], [1827, 505], [1837, 509], [1850, 517]];
const schoolB = [];
for (let x = 1610; x < 1852; x += 6) {
  const top = lerp(topB, x) + rnd() * 6;
  const end = x > 1822 ? 568 : 700;
  // the echo starts and stops down each ping
  for (let a = top; a < end;) {
    const b = a + 70 + rnd() * 120;
    schoolB.push([x, a, Math.min(b, end), 10, 1]);
    a = b + (rnd() < 0.5 ? 10 : 0);
  }
  let y = top + 6;
  while (y < end - 20) {
    const len = 16 + rnd() * 55;
    const core = x > 1655 && x < 1725 || x > 1745 && x < 1815;
    const r = rnd();
    if (r > 0.3) schoolB.push([x, y, Math.min(y + len, end - 2), 10, r > 0.94 && core ? 5 : r > (core ? 0.6 : 0.8) ? 4 : 3]);
    y += len;
  }
}
paint(schoolB, 0, 0.35);
paint([[1607, 528, 550, 10, 3], [1828, 578, 596, 10, 6], [1838, 578, 596, 10, 6], [1827, 602, 625, 8, 1], [1848, 617, 633, 8, 4], [1850, 560, 585, 8, 1]]);
blobs([[1697, 290, 380, 16], [1690, 300, 400, 12], [1671, 345, 440, 12], [1666, 330, 420, 8], [1706, 262, 330, 13], [1733, 455, 525, 20],
  [1706, 545, 620, 26], [1704, 610, 690, 18], [1690, 500, 560, 10], [1750, 430, 500, 7], [1786, 630, 690, 18], [1802, 500, 590, 9], [1791, 462, 520, 16],
  [1628, 570, 625, 18], [1670, 510, 600, 8], [1768, 560, 600, 12, '#d8fd51'], [1765, 500, 545, 10, '#fdec50'], [1645, 530, 600, 12, '#f08f33'],
  [1676, 455, 495, 10, '#d8fd51'], [1687, 560, 590, 7, '#d8fd51'], [1683, 620, 660, 8, '#75fb4c'], [1742, 560, 640, 9, '#f08f33'],
  [1815, 540, 620, 9, '#d8fd51'], [1780, 560, 610, 9, '#f08f33'],
  [1708, 250, 266, 11, '#7d170e'], [1671, 340, 400, 9, '#b22418'], [1697, 340, 380, 6, '#b22418'], [1708, 335, 390, 6, '#b22418'],
  [1732, 465, 500, 13, '#b22418'], [1791, 465, 498, 13, '#b22418'], [1687, 515, 540, 9, '#b22418'], [1628, 578, 610, 12, '#7d170e'],
  [1802, 525, 550, 6, '#7d170e'], [1708, 560, 640, 7, '#b22418'], [1668, 510, 560, 6, '#b22418']]);
cx.fillStyle = '#000';
[[1618, 500, 6, 44], [1638, 505, 6, 26], [1623, 520, 12, 28], [1613, 622, 7, 52], [1680, 418, 8, 14], [1676, 462, 6, 30],
  [1699, 500, 5, 42], [1685, 430, 5, 40], [1717, 410, 5, 55], [1725, 620, 8, 54], [1748, 540, 5, 30], [1757, 540, 6, 26], [1675, 560, 5, 30],
  [1752, 604, 12, 34], [1766, 460, 5, 40], [1648, 520, 5, 30], [1733, 612, 6, 25], [1820, 575, 4, 26]].forEach(h => cx.fillRect(...h));

// sea bed band
const bedTop = [[315, 674], [330, 668], [345, 690], [380, 660], [386, 638], [395, 650], [420, 672], [446, 655], [465, 672], [480, 666], [500, 690],
  [520, 674], [560, 665], [575, 652], [600, 660], [625, 650], [655, 646], [680, 660], [720, 662], [729, 650], [745, 660], [772, 660], [800, 672], [830, 664],
  [870, 672], [893, 662], [920, 668], [940, 676], [970, 668], [982, 658], [1015, 660], [1040, 664], [1075, 655], [1092, 634], [1110, 636], [1140, 645],
  [1160, 658], [1187, 655], [1200, 662], [1250, 666], [1280, 675], [1294, 658], [1310, 668], [1340, 672], [1370, 658], [1400, 660], [1440, 655],
  [1449, 650], [1460, 656], [1490, 662], [1510, 664], [1530, 674], [1555, 668], [1570, 674], [1584, 660], [1600, 672], [1625, 655], [1720, 660], [1800, 650], [1830, 678], [1852, 668]];
const bedBottom = [[315, 850], [340, 862], [380, 822], [389, 819], [400, 832], [448, 855], [463, 853], [478, 862], [491, 848], [504, 865], [515, 864],
  [524, 858], [540, 838], [550, 860], [565, 844], [585, 841], [606, 831], [614, 853], [626, 819], [647, 812], [657, 828], [680, 830], [690, 854], [705, 853],
  [723, 837], [744, 839], [764, 842], [774, 862], [790, 888], [802, 858], [812, 876], [830, 862], [848, 876], [863, 858], [876, 840], [907, 854],
  [932, 874], [948, 876], [963, 856], [984, 860], [1014, 842], [1040, 851], [1057, 839], [1065, 814], [1085, 816], [1095, 792], [1108, 788], [1116, 812],
  [1128, 853], [1141, 802], [1156, 812], [1174, 830], [1207, 842], [1223, 830], [1239, 864], [1256, 828], [1274, 851], [1286, 864], [1304, 853],
  [1320, 837], [1340, 864], [1358, 874], [1376, 841], [1391, 832], [1401, 864], [1417, 839], [1432, 851], [1447, 844], [1460, 792], [1478, 820],
  [1501, 805], [1513, 860], [1539, 876], [1560, 888], [1570, 805], [1580, 838], [1590, 862], [1610, 874], [1626, 858], [1646, 855], [1662, 888],
  [1682, 860], [1702, 876], [1723, 851], [1738, 836], [1753, 830], [1769, 856], [1789, 888], [1810, 855], [1825, 846], [1835, 876], [1845, 837], [1853, 802]];
const cols = [];
let left = 0, hang = 0, rise = 0, warm = 800;
for (let x = 317; x < 1856; x += 4) {
  if (left-- <= 0) {
    left = 1 + Math.floor(rnd() * 4);
    hang = rnd() < 0.3 ? -18 - rnd() * 26 : rnd() * 16 - 4;
    rise = rnd() * 5;
    warm = 784 + rnd() * 26;
  }
  cols.push({ x, t: lerp(bedTop, x) - rise + rnd() * 4, b: Math.max(790, lerp(bedBottom, x) + hang), o: warm + rnd() * 5 });
}
[['#75fb4c', 2, 2], ['#d8fd51', 1, 1], ['#fdec50', -1, 0]].forEach(([c, up, grow]) => {
  cx.fillStyle = c;
  cols.forEach(s => cx.fillRect(s.x - 2 - grow, s.t - up, 4 + grow * 2, s.b - s.t + up + (grow > 0 ? grow : -1)));
});
cols.forEach((s, i) => {
  const near = [cols[i - 1] || s, s, cols[i + 1] || s];
  const bottom = Math.min(...near.map(n => n.b)) - 3;
  const top = Math.max(...near.map(n => n.t)) + 2;
  const g = cx.createLinearGradient(0, top, 0, bottom);
  const at = y => Math.max(0, Math.min(1, (y - top) / (bottom - top)));
  g.addColorStop(0, '#f08f33');
  g.addColorStop(at(top + 5), '#ea3323');
  g.addColorStop(at(686), '#b82519');
  g.addColorStop(at(716), '#a82016');
  g.addColorStop(at(744), '#b22418');
  g.addColorStop(at(768), '#da2d21');
  g.addColorStop(at(s.o - 4), '#ea3a25');
  g.addColorStop(at(s.o + 3), '#f5bb43');
  g.addColorStop(1, '#f5bb43');
  cx.fillStyle = g;
  cx.fillRect(s.x - 2, top, 4, bottom - top);
});
// red roots reaching down into the soft layer
for (let i = 0; i < 150; i++) {
  const x = 320 + rnd() * 1528;
  const low = Math.min(...[x - 8, x, x + 8].map(v => cols[Math.max(0, Math.min(cols.length - 1, Math.round((v - 317) / 4)))].b));
  const end = 790 + rnd() * (low - 800);
  const w = 5 + rnd() * 7;
  if (end < 800) continue;
  blobs([[x, 778, end, w, '#ee6a2b'], [x, 776, end - 6, w - 3, '#ea4525']]);
}
// narrow spikes over the band
[[386, 5], [655, 4], [682, 5], [702, 4], [728, 5], [772, 5], [893, 4], [982, 5], [1015, 5], [1145, 4], [1187, 5], [1294, 5], [1372, 5], [1384, 5],
  [1406, 5], [1413, 4], [1449, 5], [1490, 5], [1500, 5], [1584, 4]].forEach(([x, lev], i) =>
  paint([[x, 637 + (i * 7) % 17, 684, 10, lev]]));
// uneven density inside the band
for (let i = 0; i < 260; i++) {
  const x = 317 + rnd() * 1530, y = 680 + rnd() * 70;
  cx.fillStyle = ['rgba(125,23,14,.28)', 'rgba(201,42,30,.3)', 'rgba(150,28,18,.35)'][i % 3];
  cx.fillRect(x, y, 10 + rnd() * 50, 10 + rnd() * 30);
}
for (let i = 0; i < 190; i++) {
  const x = 317 + rnd() * 1530;
  cx.fillStyle = i % 2 ? 'rgba(234,51,35,.6)' : 'rgba(184,37,25,.5)';
  cx.fillRect(x, 735 + rnd() * 25, 4 + rnd() * 6, 15 + rnd() * 30);
}
for (let i = 0; i < 110; i++) {
  const x = i < 80 ? 1600 + rnd() * 245 : 440 + rnd() * 80;
  cx.fillStyle = ['rgba(125,23,14,.7)', 'rgba(234,51,35,.7)', 'rgba(178,36,24,.8)'][i % 3];
  cx.fillRect(x, 680 + rnd() * 95, 4 + rnd() * 6, 12 + rnd() * 30);
}
// pale gaps
[[690, 678, 8, 50], [700, 678, 28, 10], [806, 678, 26, 24], [945, 678, 40, 14], [1565, 678, 20, 26], [1607, 680, 35, 16],
  [1675, 680, 8, 60], [1281, 678, 8, 18], [520, 680, 26, 14], [1474, 678, 12, 12]].forEach(p => {
  const g = cx.createLinearGradient(0, p[1], 0, p[1] + p[3]);
  g.addColorStop(0, 'rgba(240,170,80,.75)');
  g.addColorStop(1, 'rgba(240,110,70,.1)');
  cx.fillStyle = g;
  cx.fillRect(...p);
});
const dip = cx.createLinearGradient(0, 730, 0, 800);
dip.addColorStop(0, 'rgba(240,143,51,.2)');
dip.addColorStop(1, '#f5bb43');
cx.fillStyle = dip;
cx.beginPath();
cx.moveTo(1080, 788);
cx.lineTo(1097, 730);
cx.lineTo(1116, 788);
cx.fill();
```
